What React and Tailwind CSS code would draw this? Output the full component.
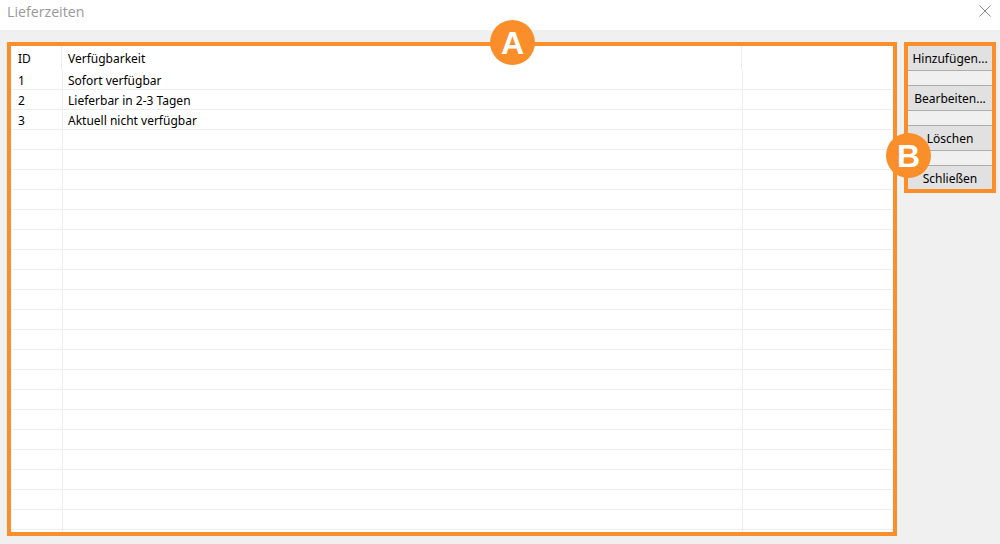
const rows = [
  { id: '1', name: 'Sofort verfügbar' },
  { id: '2', name: 'Lieferbar in 2-3 Tagen' },
  { id: '3', name: 'Aktuell nicht verfügbar' },
  ...Array.from({ length: 21 }).map(() => ({ id: '', name: '' })),
];

const buttons = ['Hinzufügen...', 'Bearbeiten...', 'Löschen', 'Schließen'];

function Badge({ label, className }) {
  return (
    <div
      className={`absolute w-[45px] h-[45px] rounded-full bg-[#f98e2a] flex items-center justify-center text-white text-[32px] font-bold font-['Liberation_Sans',sans-serif] ${className}`}
    >
      {label}
    </div>
  );
}

export default function App() {
  return (
    <div className="relative w-[1000px] h-[544px] overflow-hidden bg-[#f0f0f0] font-['Noto_Sans',sans-serif] text-[12px] text-black">
      {/* Title bar */}
      <div className="h-[30px] bg-white flex items-start justify-between pl-[7px] pr-[9px]">
        <span className="text-[14.2px] leading-[24px] text-[#999] font-['Open_Sans',sans-serif]">Lieferzeiten</span>
        <svg width="12" height="12" viewBox="0 0 12 12" className="text-[#8a8a8a] mt-[5px]">
          <path d="M0.5 0.5L11.5 11.5M11.5 0.5L0.5 11.5" stroke="currentColor" fill="none" />
        </svg>
      </div>

      <div className="flex gap-[7px] pl-[7px] pt-[12px]">
        {/* Table */}
        <div className="w-[890px] h-[494px] border-4 border-[#f98e2a] bg-white overflow-hidden">
          <div className="flex h-[24px]">
            <div className="w-[51px] pl-[7px] border-r border-[#eeeeee] leading-[26px]">ID</div>
            <div className="w-[680px] pl-[6px] border-r border-[#eeeeee] leading-[26px]">Verfügbarkeit</div>
          </div>
          {rows.map((r, i) => (
            <div key={i} className="flex h-[20px] ml-px border-b border-[#eeeeee]">
              <div className="w-[51px] pl-[6px] border-r border-[#eeeeee] pt-px leading-[20px]">{r.id}</div>
              <div className="w-[680px] pl-[5px] border-r border-[#eeeeee] pt-px leading-[20px]">{r.name}</div>
            </div>
          ))}
        </div>

        {/* Buttons */}
        <div className="w-[92px] h-[151px] border-4 border-[#f98e2a] flex flex-col gap-[14px]">
          {buttons.map((b) => (
            <button
              key={b}
              className="h-[26px] first:h-[25px] last:h-[24px] shrink-0 pt-[2px] bg-[#e1e1e1] border-y border-[#adadad] first:border-t-0 last:border-b-0 whitespace-nowrap text-center"
            >
              {b}
            </button>
          ))}
        </div>
      </div>

      <Badge label="A" className="left-[490px] top-[20px]" />
      <Badge label="B" className="left-[886px] top-[133px]" />
    </div>
  );
}
